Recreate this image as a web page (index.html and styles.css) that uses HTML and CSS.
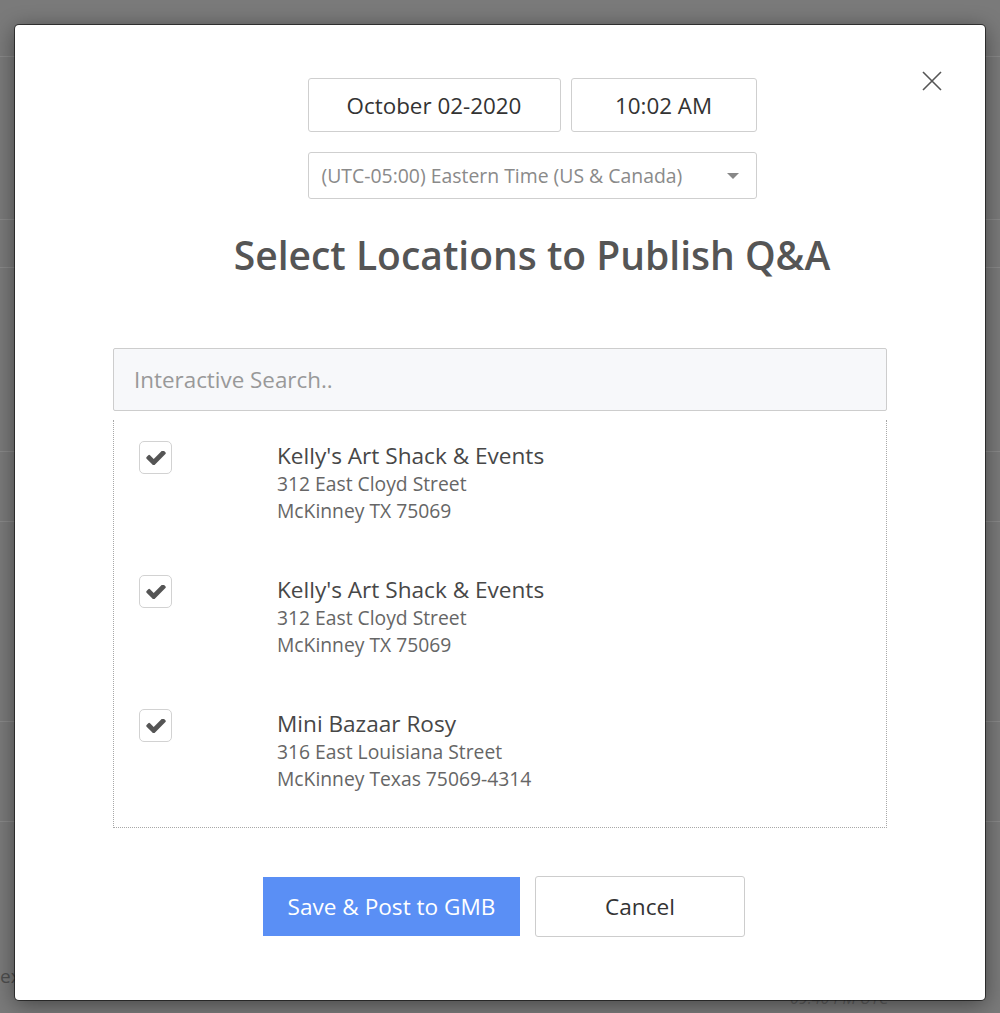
FILE: index.html
```html
<!DOCTYPE html>
<html lang="en">
<head>
<meta charset="utf-8">
<title>Select Locations to Publish Q&amp;A</title>
<link rel="stylesheet" href="styles.css">
</head>
<body>
<div class="page">
  <div class="bg-row r1"></div>
  <div class="bg-row r2"></div>
  <div class="bg-row r3"></div>
  <div class="bg-row r4"></div>
  <div class="bg-row r5"></div>
  <div class="bg-row r6"></div>
  <div class="bg-row r7"></div>
  <div class="bg-last">
    <span class="bg-word">ex</span>
    <span class="bg-time">09:40 PM UTC</span>
  </div>
</div>

<div class="modal">
  <button class="close" aria-label="Close">
    <svg width="20" height="20" viewBox="0 0 20 20"><path d="M1 1L19 19M19 1L1 19" stroke="#555" stroke-width="1.6" fill="none"/></svg>
  </button>

  <div class="head">
    <div class="dt-row">
      <div class="field date">October 02-2020</div>
      <div class="field time">10:02 AM</div>
    </div>
    <div class="tz">
      <span>(UTC-05:00) Eastern Time (US &amp; Canada)</span>
      <span class="caret"></span>
    </div>
    <h2 class="title">Select Locations to Publish Q&amp;A</h2>
  </div>

  <div class="body">
    <div class="search">Interactive Search..</div>
    <div class="list">
      <div class="item">
        <span class="cb"><svg width="20" height="14" viewBox="120 390 1551 1110"><path fill="#555" d="M1671 566q0 40-28 68l-724 724-136 136q-28 28-68 28t-68-28l-136-136-362-362q-28-28-28-68t28-68l136-136q28-28 68-28t68 28l294 295 656-657q28-28 68-28t68 28l136 136q28 28 28 68z"/></svg></span>
        <div class="info">
          <div class="name">Kelly's Art Shack &amp; Events</div>
          <div class="addr">312 East Cloyd Street</div>
          <div class="addr">McKinney TX 75069</div>
        </div>
      </div>
      <div class="item">
        <span class="cb"><svg width="20" height="14" viewBox="120 390 1551 1110"><path fill="#555" d="M1671 566q0 40-28 68l-724 724-136 136q-28 28-68 28t-68-28l-136-136-362-362q-28-28-28-68t28-68l136-136q28-28 68-28t68 28l294 295 656-657q28-28 68-28t68 28l136 136q28 28 28 68z"/></svg></span>
        <div class="info">
          <div class="name">Kelly's Art Shack &amp; Events</div>
          <div class="addr">312 East Cloyd Street</div>
          <div class="addr">McKinney TX 75069</div>
        </div>
      </div>
      <div class="item">
        <span class="cb"><svg width="20" height="14" viewBox="120 390 1551 1110"><path fill="#555" d="M1671 566q0 40-28 68l-724 724-136 136q-28 28-68 28t-68-28l-136-136-362-362q-28-28-28-68t28-68l136-136q28-28 68-28t68 28l294 295 656-657q28-28 68-28t68 28l136 136q28 28 28 68z"/></svg></span>
        <div class="info">
          <div class="name">Mini Bazaar Rosy</div>
          <div class="addr">316 East Louisiana Street</div>
          <div class="addr">McKinney Texas 75069-4314</div>
        </div>
      </div>
    </div>
  </div>

  <div class="actions">
    <button class="btn primary">Save &amp; Post to GMB</button>
    <button class="btn secondary">Cancel</button>
  </div>
</div>
</body>
</html>
```

FILE: styles.css
```css
* { box-sizing: border-box; }

html, body {
  margin: 0;
  padding: 0;
  height: 100%;
}

body {
  background: #7a7a7a;
  font-family: "Open Sans", "Noto Sans", sans-serif;
  overflow: hidden;
  position: relative;
}

/* background page (behind the overlay) */
.page {
  display: flex;
  flex-direction: column;
  height: 1013px;
}
.bg-row { border-bottom: 1px solid #898989; }
.r1 { height: 57px; }
.r2 { height: 163px; }
.r3 { height: 48px; }
.r4 { height: 184px; }
.r5 { height: 70px; }
.r6 { height: 200px; }
.r7 { height: 100px; }
.bg-last {
  flex: 1;
  position: relative;
}
.bg-word {
  position: absolute;
  left: 0;
  top: 141px;
  font-size: 19px;
  color: #4e4e4e;
}
.bg-time {
  position: absolute;
  left: 790px;
  top: 165px;
  font-size: 16px;
  font-style: italic;
  color: #5e5e5e;
}

/* modal */
.modal {
  position: absolute;
  left: 15px;
  top: 25px;
  width: 970px;
  height: 975px;
  background: #fff;
  border-radius: 4px;
  box-shadow: 0 0 0 1px rgba(0,0,0,0.55), 0 4px 22px rgba(0,0,0,0.45);
  padding-top: 53px;
}

.close {
  position: absolute;
  top: 46px;
  right: 43px;
  width: 20px;
  height: 20px;
  padding: 0;
  border: 0;
  background: none;
  display: flex;
}

.head {
  display: flex;
  flex-direction: column;
  align-items: center;
  padding-left: 64px;
}

.dt-row {
  display: flex;
  gap: 10px;
}

.field {
  height: 54px;
  border: 1px solid #cfcfcf;
  border-radius: 3px;
  display: flex;
  align-items: center;
  justify-content: center;
  font-size: 22.4px;
  color: #333;
}
.date { width: 253px; }
.time { width: 186px; }

.tz {
  margin-top: 20px;
  width: 449px;
  height: 47px;
  border: 1px solid #cfcfcf;
  border-radius: 3px;
  display: flex;
  align-items: center;
  justify-content: space-between;
  padding: 0 17px 0 13px;
  font-size: 19.4px;
  color: #8a8a8a;
}
.caret {
  width: 0;
  height: 0;
  border-left: 6px solid transparent;
  border-right: 6px solid transparent;
  border-top: 6px solid #888;
}

.title {
  margin: 34px 0 0;
  font-size: 39px;
  line-height: 44px;
  font-weight: 600;
  color: #555;
}

.body {
  margin-top: 71px;
  padding: 0 98px;
}

.search {
  height: 63px;
  border: 1px solid #cdcdcd;
  border-radius: 2px;
  background: #f7f8fa;
  display: flex;
  align-items: center;
  padding-left: 20px;
  font-size: 22.4px;
  color: #999;
}

.list {
  margin-top: 9px;
  border: 1px dotted #a8a8a8;
  border-top: 0;
  padding-bottom: 5px;
}

.item {
  display: flex;
  align-items: flex-start;
  padding: 21px 0 31px 25px;
  height: 134px;
}

.cb {
  width: 33px;
  height: 33px;
  border: 1px solid #d2d2d2;
  border-radius: 5px;
  display: flex;
  align-items: center;
  justify-content: center;
  flex: none;
}

.info {
  margin-left: 105px;
  display: flex;
  flex-direction: column;
}
.name {
  font-size: 22.6px;
  line-height: 28px;
  color: #474747;
  margin-top: 1px;
}
.addr {
  font-size: 19.3px;
  line-height: 27px;
  color: #666;
}

.actions {
  margin-top: 48px;
  display: flex;
  justify-content: center;
  align-items: center;
  gap: 15px;
  padding-left: 8px;
}

.btn {
  font-family: "Open Sans", "Noto Sans", sans-serif;
  font-size: 22.6px;
  cursor: pointer;
}
.primary {
  width: 257px;
  height: 59px;
  background: #5a8ff5;
  color: #fff;
  border: 0;
  border-radius: 0;
}
.secondary {
  width: 210px;
  height: 61px;
  background: #fff;
  color: #333;
  border: 1px solid #cdcdcd;
  border-radius: 3px;
}
```
